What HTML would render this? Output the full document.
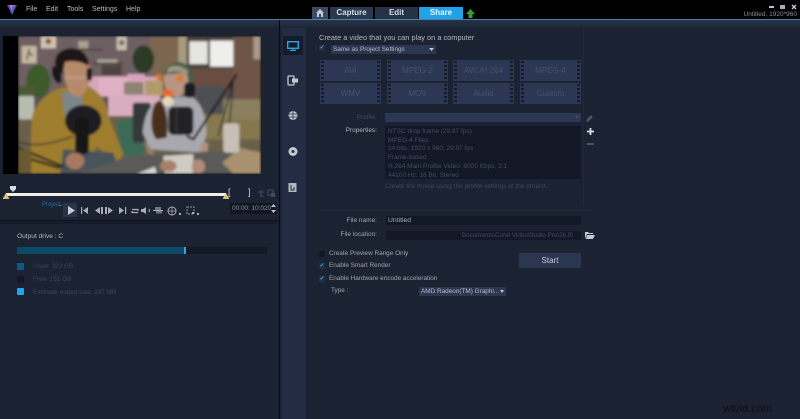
<!DOCTYPE html>
<html><head><meta charset="utf-8">
<style>
html,body{margin:0;padding:0;background:#1b2231;}
#p{position:relative;width:800px;height:419px;overflow:hidden;background:#1b2231;font-family:"Liberation Sans",sans-serif;color:#c8ccd2;}
.a{position:absolute;}
.t{position:absolute;white-space:nowrap;line-height:12px;font-size:6.5px;}
.fmt{position:absolute;width:61px;height:21px;background:#2b3753;color:#46536f;font-size:8px;line-height:21px;text-align:center;}
.fmt:before,.fmt:after{content:"";position:absolute;top:1px;bottom:1px;width:3px;background:repeating-linear-gradient(#141b2a 0 2px,#2b3753 2px 4px);}
.fmt:before{left:1px}.fmt:after{right:1px}
.tab{position:absolute;top:7px;height:12px;line-height:12px;text-align:center;font-size:8px;font-weight:bold;color:#d8dce2;background:#2a3850;}
.chk{position:absolute;width:6px;height:6px;background:#1f3048;color:#7fc4ee;font-size:6px;line-height:6px;text-align:center;}
</style></head><body><div id="p">

<!-- top bar -->
<div class="a" style="left:0;top:0;width:800px;height:19px;background:#000"></div>
<div class="a" style="left:0;top:19px;width:800px;height:1px;background:#50809f"></div>
<div class="a" style="left:0;top:20px;width:800px;height:8px;background:linear-gradient(#26344a,#1d2536)"></div>
<svg class="a" style="left:6px;top:3px" width="12" height="13" viewBox="0 0 12 13"><path d="M1 2 L11 2 L6 12Z" fill="#6a3fb0"/><path d="M3 2 L9 2 L6 8Z" fill="#c070d0"/><path d="M6 4 L9 2 L6 12Z" fill="#3a78b8"/></svg>
<div class="t" style="left:26px;top:4px;font-size:7px;color:#b8bcc4">File</div>
<div class="t" style="left:46px;top:4px;font-size:7px;color:#b8bcc4">Edit</div>
<div class="t" style="left:67px;top:4px;font-size:7px;color:#b8bcc4">Tools</div>
<div class="t" style="left:92px;top:4px;font-size:7px;color:#b8bcc4">Settings</div>
<div class="t" style="left:126px;top:4px;font-size:7px;color:#b8bcc4">Help</div>

<!-- tabs -->
<div class="tab" style="left:312px;width:16px;background:#3d4b64"></div>
<svg class="a" style="left:316px;top:9px" width="8" height="8" viewBox="0 0 8 8"><path d="M4 0 L8 4 L7 4 L7 8 L5 8 L5 5 L3 5 L3 8 L1 8 L1 4 L0 4Z" fill="#c4c8d0"/></svg>
<div class="tab" style="left:330px;width:43px">Capture</div>
<div class="tab" style="left:375px;width:43px;background:#253248">Edit</div>
<div class="tab" style="left:419px;width:44px;background:#1ea3ea;color:#eaf6ff">Share</div>
<svg class="a" style="left:466px;top:9px" width="9" height="9" viewBox="0 0 9 9"><path d="M4.5 0 L9 5 L6.5 5 L6.5 9 L2.5 9 L2.5 5 L0 5Z" fill="#3f9a3a"/></svg>

<!-- window controls -->
<div class="a" style="left:769px;top:6px;width:5px;height:2px;background:#c0c4ca"></div>
<div class="a" style="left:780px;top:5px;width:5px;height:4px;background:#a8acb4"></div>
<svg class="a" style="left:791px;top:4px" width="6" height="6" viewBox="0 0 6 6"><path d="M1 1 L5 5 M5 1 L1 5" stroke="#c8ccd2" stroke-width="1.3"/></svg>
<div class="t" style="right:3px;top:10px;font-size:6.5px;line-height:10px;color:#8a8e96">Untitled, 1920*960</div>

<!-- video black -->
<div class="a" style="left:3px;top:36px;width:258px;height:138px;background:#000"></div>
<svg class="a" style="left:18px;top:36px" width="243" height="138" viewBox="-6 0 729 414">
<defs><filter id="b" x="-5%" y="-5%" width="110%" height="110%"><feGaussianBlur stdDeviation="4"/></filter></defs>
<clipPath id="c"><rect x="-6" y="0" width="729" height="414"/></clipPath>
<g clip-path="url(#c)"><g filter="url(#b)">
<rect x="-6" y="0" width="729" height="414" fill="#5d5254"/>
<rect x="-6" y="0" width="400" height="170" fill="#6e5e62"/>
<rect x="390" y="0" width="115" height="170" fill="#7c6650"/>
<rect x="475" y="0" width="30" height="90" fill="#a89a80"/>
<rect x="500" y="0" width="150" height="110" fill="#4a4240"/>
<rect x="508" y="16" width="55" height="68" fill="#e6e6e0"/>
<rect x="570" y="14" width="72" height="78" fill="#eeeeea"/>
<rect x="640" y="0" width="83" height="260" fill="#6e5444"/>
<rect x="700" y="0" width="23" height="70" fill="#a89888"/>
<rect x="505" y="98" width="135" height="60" fill="#6a4e42"/>
<rect x="5" y="30" width="45" height="52" fill="#c4b8a0"/><path d="M28 38 L20 72 M28 50 L38 60" stroke="#5a5a40" stroke-width="5"/>
<rect x="63" y="0" width="45" height="37" fill="#cfc4b0"/><circle cx="85" cy="16" r="9" fill="#8a5a48"/>
<rect x="290" y="0" width="30" height="42" fill="#c8c0b0"/><circle cx="305" cy="20" r="8" fill="#6a6a58"/>
<rect x="170" y="38" width="80" height="5" fill="#4a3e3a"/><rect x="175" y="15" width="30" height="22" fill="#a8a090"/>
<rect x="220" y="80" width="90" height="5" fill="#3e3432"/><rect x="232" y="70" width="60" height="10" fill="#a8a498"/>
<rect x="245" y="88" width="60" height="30" fill="#4e4240"/>
<ellipse cx="370" cy="70" rx="32" ry="42" fill="#2c3a26"/>
<ellipse cx="55" cy="135" rx="36" ry="50" fill="#3c5a2c"/>
<rect x="-6" y="150" width="50" height="30" fill="#4a5a34"/>
<!-- floor -->
<rect x="-6" y="240" width="729" height="174" fill="#6a6048"/>
<path d="M290 255 L360 240 L400 330 L340 370 L300 350Z" fill="#3e6a58"/>
<rect x="540" y="230" width="183" height="80" fill="#857850"/>
<!-- sofa -->
<rect x="200" y="122" width="220" height="60" rx="8" fill="#d6a6ba"/>
<rect x="265" y="178" width="155" height="62" fill="#d8aebf"/>
<rect x="235" y="122" width="92" height="56" rx="6" fill="#e0b0c4"/>
<rect x="322" y="114" width="52" height="30" fill="#d8a4bc"/>
<rect x="312" y="138" width="58" height="38" rx="4" fill="#8e8272"/>
<rect x="376" y="134" width="52" height="44" rx="4" fill="#b09a6c"/>
<rect x="-6" y="180" width="48" height="70" rx="6" fill="#b8bcb0"/>
<!-- chair right -->
<rect x="530" y="150" width="80" height="85" rx="10" fill="#4e5052"/>
<rect x="610" y="190" width="113" height="60" fill="#8a8060"/>
<rect x="338" y="200" width="55" height="120" rx="8" fill="#36383a"/>
<!-- man -->
<path d="M30 400 L36 240 Q60 175 125 155 L205 150 Q260 180 265 240 L310 355 L290 380 L230 330 L200 414 L30 414Z" fill="#9e7e2e"/>
<path d="M124 170 L185 160 L190 240 L135 240Z" fill="#7a8688"/>
<path d="M130 70 Q130 100 135 135 Q150 185 175 182 Q205 170 210 125 L210 85 Z" fill="#b88a6c"/>
<path d="M105 90 Q100 40 155 36 Q205 42 207 90 L195 85 Q175 70 135 78 L128 115 Z" fill="#1e1614"/>
<path d="M96 92 Q92 130 115 142 L125 138 L122 92Z" fill="#17171a"/>
<rect x="200" y="96" width="16" height="38" rx="6" fill="#17171a"/>
<path d="M135 125 H200" stroke="#d8d8d0" stroke-width="3" opacity=".5"/>
<path d="M130 340 L280 350 L300 414 L120 414Z" fill="#48525a"/>
<!-- mic man -->
<ellipse cx="190" cy="254" rx="55" ry="47" fill="#1c1c20"/>
<rect x="165" y="245" width="42" height="110" rx="14" fill="#141416"/>
<path d="M-6 318 Q60 340 160 300" stroke="#2a2a2c" stroke-width="4" fill="none"/>
<path d="M-6 335 L130 392 M-6 358 L120 396" stroke="#1c1c1e" stroke-width="7"/>
<ellipse cx="165" cy="375" rx="28" ry="25" fill="#a87860"/>
<ellipse cx="315" cy="390" rx="26" ry="24" fill="#b08a70"/>
<!-- woman -->
<path d="M368 290 Q375 210 420 190 L510 180 Q555 200 560 290 L545 350 L390 340Z" fill="#a8a8ae"/>
<path d="M395 240 Q400 190 425 195 Q450 240 440 305 L410 310 Q390 290 395 240Z" fill="#4a2e1e"/>
<path d="M370 310 L395 340 L440 400 L425 414 L395 390 Z" fill="#9a7a68"/>
<path d="M545 320 L565 320 L560 380 L530 395Z" fill="#b09080"/>
<path d="M430 125 Q435 175 470 185 Q505 175 505 125 L500 110 L440 110Z" fill="#b89484"/>
<path d="M432 115 Q440 80 480 78 Q525 90 525 150 L505 130 L500 110Z" fill="#4a5c4a"/>
<path d="M445 95 Q475 80 505 105 L500 118 Q470 98 440 112Z" fill="#9a9a80"/>
<rect x="492" y="140" width="34" height="45" rx="12" fill="#1c1c20"/>
<path d="M408 112 L425 118 L422 136 L410 130Z" fill="#d87a28"/>
<path d="M468 122 L488 112 L490 138 L472 138Z" fill="#d87a28"/>
<ellipse cx="444" cy="172" rx="16" ry="12" fill="#e86a20"/>
<ellipse cx="444" cy="196" rx="17" ry="15" fill="#e4d8b8"/>
<!-- mic woman -->
<rect x="445" y="212" width="75" height="85" rx="16" fill="#242426"/>
<path d="M470 214 V290" stroke="#444" stroke-width="3"/>
<path d="M500 300 L520 310 L600 190 L650 115" stroke="#1a1a1c" stroke-width="7" fill="none"/>
<path d="M595 300 L640 130 L625 300" stroke="#222224" stroke-width="4" fill="none"/>
<!-- desk -->
<path d="M170 414 L335 358 L700 340 L723 414Z" fill="#5a5a58"/>
<path d="M430 360 L520 354 L520 414 L435 414Z" fill="#d0ccc4"/>
<path d="M350 414 L405 392 L410 414Z" fill="#d4d4d0"/>
<path d="M606 380 L660 336 L723 350 L723 414 L640 414Z" fill="#a89070"/>
<rect x="610" y="262" width="48" height="88" rx="10" fill="#c8c0b8"/>
<ellipse cx="445" cy="390" rx="25" ry="18" fill="#a8806a"/>
<ellipse cx="535" cy="392" rx="20" ry="22" fill="#b08c78"/>
<rect x="-6" y="340" width="40" height="74" fill="#6a5a30"/>
</g></g></svg>

<!-- slider -->
<svg class="a" style="left:10px;top:186px" width="8" height="7" viewBox="0 0 8 7"><path d="M0 0 H6 V3 L3 6 L0 3Z" fill="#d8dce0"/></svg>
<div class="a" style="left:6px;top:193px;width:220px;height:3px;background:#f0eee6"></div>
<svg class="a" style="left:3px;top:193px" width="6" height="6" viewBox="0 0 6 6"><path d="M3 0 L6 5 L6 6 H0 V5Z" fill="#d8bc78"/></svg>
<svg class="a" style="left:223px;top:193px" width="6" height="6" viewBox="0 0 6 6"><path d="M3 0 L6 5 L6 6 H0 V5Z" fill="#d8bc78"/></svg>
<div class="t" style="left:228px;top:187px;font-size:9px;color:#d0d4da;line-height:11px">[</div>
<div class="t" style="left:248px;top:187px;font-size:9px;color:#d0d4da;line-height:11px">]</div>
<svg class="a" style="left:257px;top:189px" width="20" height="9" viewBox="0 0 20 9"><path d="M1 3 H7 M4 1 V8 M4 6 L7 8" stroke="#414d64" stroke-width="1" fill="none"/><rect x="11" y="1" width="5" height="5" fill="none" stroke="#414d64"/><rect x="14" y="4" width="4" height="4" fill="#414d64"/></svg>

<!-- transport -->
<div class="t" style="left:42px;top:200px;font-size:6px;color:#1f6fb4;line-height:10px">Project</div>
<div class="a" style="left:59px;top:205px;width:3px;height:1px;background:#1f6fb4"></div>
<div class="a" style="left:63px;top:203px;width:14px;height:14px;background:#28344a;border-radius:1px"></div>
<svg class="a" style="left:66px;top:205px" width="170" height="12" viewBox="0 0 170 12">
<path d="M2 1 L9 5.5 L2 10Z" fill="#c8ccd4"/>
<g fill="#a8aeb8">
<rect x="15" y="2" width="1.2" height="7"/><path d="M22 2 V9 L17 5.5Z"/>
<path d="M34 2 V9 L29 5.5Z"/><rect x="35" y="2" width="2" height="7"/>
<rect x="39" y="2" width="2" height="7"/><path d="M42 2 V9 L47 5.5Z"/>
<path d="M53 2 V9 L58 5.5Z"/><rect x="59" y="2" width="1.2" height="7"/>
<path d="M75 4 V7 H77 L80 9 V2 L77 4Z"/>
</g>
<path d="M66 4.5 H72 V6 M72 7.5 H66 V6" stroke="#a8aeb8" stroke-width="1.2" fill="none"/>
<path d="M83 4 Q84 5.5 83 7" stroke="#a8aeb8" fill="none"/>
<path d="M87 5.5 H97" stroke="#a8aeb8"/><rect x="89" y="2" width="6" height="3" fill="#6c7686"/><rect x="90" y="6" width="6" height="2.5" fill="#6c7686"/>
<circle cx="106" cy="6" r="4" fill="none" stroke="#a8aeb8"/><path d="M102 6 H110 M106 2 V10" stroke="#a8aeb8" stroke-width=".7"/>
<rect x="113" y="8" width="2" height="2" fill="#a8aeb8"/>
<rect x="121" y="2" width="7" height="7" fill="none" stroke="#8a92a0" stroke-dasharray="2 1"/>
<rect x="126" y="7" width="2" height="2" fill="#a8aeb8"/><rect x="131" y="8" width="2" height="2" fill="#a8aeb8"/>
</svg>

<!-- timecode -->
<div class="a" style="left:230px;top:203px;width:46px;height:11px;background:#111622"></div>
<div class="t" style="left:232px;top:203px;font-size:6.6px;line-height:11px;color:#8a909c;letter-spacing:-.1px">00:00: 10:020</div>
<svg class="a" style="left:271px;top:204px" width="5" height="9" viewBox="0 0 5 9"><path d="M0 3 L2.5 0 L5 3Z M0 6 L2.5 9 L5 6Z" fill="#c0c4cc"/></svg>

<!-- divider -->
<div class="a" style="left:0;top:220px;width:278px;height:1px;background:#0c111b"></div>
<div class="a" style="left:0;top:221px;width:278px;height:3px;background:#151c2a"></div>
<div class="a" style="left:279px;top:20px;width:1px;height:399px;background:#060a12"></div>

<!-- output drive -->
<div class="t" style="left:17px;top:231px;font-size:6.6px;color:#b4b8c0">Output drive : C</div>
<div class="a" style="left:17px;top:247px;width:250px;height:7px;background:#121826"></div>
<div class="a" style="left:17px;top:247px;width:167px;height:7px;background:#0d4a68"></div>
<div class="a" style="left:184px;top:247px;width:2px;height:7px;background:#3ba0d6"></div>
<div class="a" style="left:17px;top:263px;width:7px;height:7px;background:#0f5a80"></div>
<div class="a" style="left:17px;top:276px;width:7px;height:7px;background:#111724"></div>
<div class="a" style="left:17px;top:288px;width:7px;height:7px;background:#1da7ee;border-radius:1px"></div>
<div class="t" style="left:33px;top:261px;color:#3c475c;font-size:6.4px">Used: 323 GB</div>
<div class="t" style="left:33px;top:274px;color:#3c475c;font-size:6.4px">Free: 151 GB</div>
<div class="t" style="left:33px;top:287px;color:#3c475c;font-size:6.4px">Estimate output size: 297 MB</div>

<!-- right sidebar -->
<div class="a" style="left:282px;top:28px;width:24px;height:391px;background:#222c42"></div>
<div class="a" style="left:283px;top:36px;width:20px;height:19px;background:#141b2a"></div>
<svg class="a" style="left:287px;top:41px" width="12" height="10" viewBox="0 0 12 10"><rect x=".7" y=".7" width="10.6" height="6.6" fill="none" stroke="#2ea4e0" stroke-width="1.4"/><path d="M3 9.5 H9 M6 8 V9.5" stroke="#2ea4e0" stroke-width="1.2"/></svg>
<svg class="a" style="left:287px;top:75px" width="12" height="11" viewBox="0 0 12 11"><rect x="1" y="1" width="6" height="9" rx="1" fill="none" stroke="#c4c8d0" stroke-width="1.3"/><rect x="5" y="3.5" width="6" height="4" fill="#c4c8d0"/></svg>
<svg class="a" style="left:288px;top:110px" width="10" height="11" viewBox="0 0 10 11"><circle cx="5" cy="5.5" r="4.5" fill="#c4c8d0"/><path d="M.5 4 H9.5 M.5 7 H9.5 M5 1 V10" stroke="#222c42" stroke-width=".7"/></svg>
<svg class="a" style="left:288px;top:146px" width="10" height="11" viewBox="0 0 10 11"><circle cx="5" cy="5.5" r="4.5" fill="#c4c8d0"/><circle cx="5" cy="5.5" r="1.5" fill="#222c42"/></svg>
<svg class="a" style="left:288px;top:182px" width="10" height="11" viewBox="0 0 10 11"><rect x=".5" y="1" width="8" height="9" fill="#b4b8c0"/><path d="M3 3 V8 H6 V5" stroke="#222c42" fill="none"/></svg>

<!-- main panel -->
<div class="t" style="left:319px;top:32px;font-size:7.4px;color:#b4b8c0">Create a video that you can play on a computer</div>
<div class="chk" style="left:319px;top:45px">✓</div>
<div class="a" style="left:331px;top:45px;width:105px;height:9px;background:#2b3650"></div>
<div class="t" style="left:333px;top:44px;font-size:6.4px;line-height:11px;color:#b8bcc4">Same as Project Settings</div>
<svg class="a" style="left:429px;top:48px" width="5" height="3" viewBox="0 0 5 3"><path d="M0 0 H5 L2.5 3Z" fill="#c4c8d0"/></svg>

<div class="fmt" style="left:320px;top:60px">AVI</div>
<div class="fmt" style="left:387px;top:60px">MPEG-2</div>
<div class="fmt" style="left:453px;top:60px">AVC/H.264</div>
<div class="fmt" style="left:520px;top:60px">MPEG-4</div>
<div class="fmt" style="left:320px;top:83px">WMV</div>
<div class="fmt" style="left:387px;top:83px">MOV</div>
<div class="fmt" style="left:453px;top:83px">Audio</div>
<div class="fmt" style="left:520px;top:83px">Custom</div>

<div class="t" style="right:423px;top:112px;color:#3f4a60">Profile:</div>
<div class="a" style="left:385px;top:113px;width:196px;height:9px;background:#2b3753"></div>
<svg class="a" style="left:575px;top:116px" width="4" height="3" viewBox="0 0 4 3"><path d="M0 0 H4 L2 3Z" fill="#414d66"/></svg>
<svg class="a" style="left:586px;top:114px" width="8" height="8" viewBox="0 0 8 8"><path d="M0 8 L1 5 L5 1 L7 3 L3 7Z" fill="#4a5468"/></svg>
<svg class="a" style="left:586px;top:127px" width="9" height="9" viewBox="0 0 9 9"><path d="M4.5 1 V8 M1 4.5 H8" stroke="#d8dce2" stroke-width="1.8"/></svg>
<div class="a" style="left:587px;top:143px;width:7px;height:1.5px;background:#4a5468"></div>
<div class="a" style="left:583px;top:28px;width:1px;height:178px;background:#20293a"></div>

<div class="t" style="right:423px;top:125px;color:#b0b4bc">Properties:</div>
<div class="a" style="left:385px;top:126px;width:196px;height:53px;background:#121826"></div>
<div class="t" style="left:388px;top:128px;line-height:8.7px;font-size:6.5px;color:#414c62;white-space:pre">NTSC drop frame (29.97 fps)
MPEG-4 Files
24 bits, 1920 x 960, 29.97 fps
Frame-based
H.264 Main Profile Video: 8000 Kbps, 2:1
44100 Hz, 16 Bit, Stereo</div>
<div class="t" style="left:385px;top:181px;font-size:6.5px;color:#3f4a60">Create the movie using the profile settings of the project.</div>

<div class="a" style="left:320px;top:210px;width:270px;height:1px;background:#232c3e"></div>
<div class="t" style="right:423px;top:215px;font-size:6.5px;color:#a0a4ac">File name:</div>
<div class="a" style="left:386px;top:216px;width:195px;height:9px;background:#121826"></div>
<div class="t" style="left:388px;top:215px;font-size:6.8px;color:#a8acb4">Untitled</div>
<div class="t" style="right:423px;top:229px;font-size:6.5px;color:#a0a4ac">File location:</div>
<div class="a" style="left:386px;top:231px;width:195px;height:9px;background:#121826"></div>
<div class="t" style="right:227px;top:230px;font-size:6.3px;color:#3f4a60">Documents\Corel VideoStudio Pro\26.0\</div>
<svg class="a" style="left:585px;top:231px" width="10" height="9" viewBox="0 0 10 9"><path d="M0 1 H3 L4 2 H8 V3 H2 L0 8Z" fill="#c4c8d0"/><path d="M2 4 H10 L8 8 H1Z" fill="#c4c8d0"/></svg>

<div class="a" style="left:319px;top:251px;width:6px;height:6px;background:#111724"></div>
<div class="chk" style="left:319px;top:263px">✓</div>
<div class="chk" style="left:319px;top:276px">✓</div>
<div class="t" style="left:329px;top:248px;font-size:6.4px;color:#a0a4ac">Create Preview Range Only</div>
<div class="t" style="left:329px;top:260px;font-size:6.4px;color:#a0a4ac">Enable Smart Render</div>
<div class="t" style="left:329px;top:273px;font-size:6.4px;color:#a0a4ac">Enable Hardware encode acceleration</div>
<div class="t" style="left:331px;top:285px;font-size:6.4px;color:#a0a4ac">Type :</div>
<div class="a" style="left:419px;top:287px;width:87px;height:9px;background:#2b3650"></div>
<div class="t" style="left:421px;top:286px;font-size:6.4px;line-height:11px;color:#b8bcc4">AMD Radeon(TM) Graphi...</div>
<svg class="a" style="left:500px;top:290px" width="4" height="3" viewBox="0 0 4 3"><path d="M0 0 H4 L2 3Z" fill="#c4c8d0"/></svg>

<div class="a" style="left:519px;top:253px;width:62px;height:15px;background:#2b3650;color:#c8ccd4;font-size:8px;line-height:15px;text-align:center">Start</div>

<div class="t" style="left:723px;top:403px;font-size:11px;color:#0c1018">wtvid.com</div>
</div></body></html>
